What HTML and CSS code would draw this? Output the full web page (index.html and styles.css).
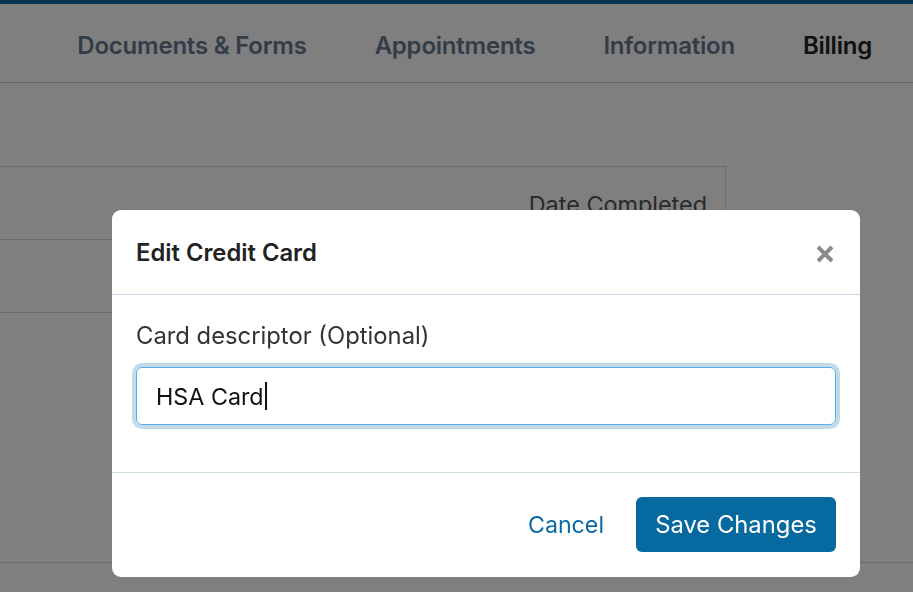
FILE: index.html
```html
<!DOCTYPE html>
<html>
<head>
<meta charset="utf-8">
<link rel="stylesheet" href="styles.css">
</head>
<body>
<div class="topbar"></div>
<nav class="nav">
  <a class="nav-item">Documents &amp; Forms</a>
  <a class="nav-item">Appointments</a>
  <a class="nav-item">Information</a>
  <a class="nav-item active">Billing</a>
</nav>
<main class="content">
  <div class="table">
    <div class="row head"><span class="cell-right">Date Completed</span></div>
    <div class="row"></div>
  </div>
  <div class="bottom-line"></div>
</main>

<div class="overlay"></div>
<div class="modal">
  <div class="modal-header">
    <h2 class="modal-title">Edit Credit Card</h2>
    <button class="close" aria-label="Close">
      <svg width="18" height="18" viewBox="0 0 18 18"><path d="M2 2 L16 16 M16 2 L2 16" stroke="#8a8a8a" stroke-width="4" stroke-linecap="butt"/></svg>
    </button>
  </div>
  <div class="modal-body">
    <label class="label">Card descriptor (Optional)</label>
    <div class="input"><span class="input-text">HSA Card</span><span class="caret"></span></div>
  </div>
  <div class="modal-footer">
    <a class="btn-link">Cancel</a>
    <button class="btn-primary">Save Changes</button>
  </div>
</div>
</body>
</html>
```
FILE: styles.css
```css
* { box-sizing: border-box; }
html, body { margin: 0; padding: 0; }
body {
  width: 913px;
  height: 592px;
  overflow: hidden;
  background: #ffffff;
  font-family: Inter, "Noto Sans", sans-serif;
}
.topbar { height: 4px; background: #0b6aa3; }
.nav {
  height: 79px;
  border-bottom: 1px solid #cdd3da;
  display: flex;
  justify-content: flex-end;
  align-items: center;
  gap: 68px;
  padding-right: 41px;
  padding-top: 4px;
}
.nav-item {
  font-size: 24px;
  font-weight: 600;
  color: #66788f;
  letter-spacing: -0.22px;
}
.nav-item.active { color: #222222; }
.content { padding-top: 83px; }
.table {
  width: 726px;
  border-top: 1px solid #d6d6d6;
  border-right: 1px solid #d6d6d6;
}
.row {
  height: 73px;
  border-bottom: 1px solid #d6d6d6;
  display: flex;
  justify-content: flex-end;
  align-items: center;
  padding-right: 18px;
}
.cell-right {
  font-size: 23.4px;
  color: #555555;
  padding-top: 2px;
}
.bottom-line {
  margin-top: 249px;
  border-top: 1px solid #d6d6d6;
}
.overlay {
  position: fixed;
  inset: 0;
  background: rgba(0, 0, 0, 0.5);
}
.modal {
  position: fixed;
  left: 112px;
  top: 210px;
  width: 748px;
  height: 367px;
  background: #ffffff;
  border-radius: 9px;
  display: flex;
  flex-direction: column;
}
.modal-header {
  height: 85px;
  border-bottom: 1px solid #cdd8e6;
  display: flex;
  align-items: center;
  justify-content: space-between;
  padding: 0 24px;
}
.modal-title {
  margin: 0;
  font-size: 23.8px;
  font-weight: 600;
  color: #222222;
  padding-top: 1px;
}
.close {
  border: 0;
  background: none;
  padding: 0;
  margin-top: 3px;
  width: 22px;
  height: 22px;
  display: flex;
  align-items: center;
  justify-content: center;
}
.modal-body {
  padding: 26px 24px 0 24px;
  height: 178px;
  border-bottom: 1px solid #cfdde6;
  display: flex;
  flex-direction: column;
}
.label {
  font-size: 23.8px;
  color: #333333;
  line-height: 30px;
  margin-bottom: 16px;
}
.input {
  height: 58px;
  border: 1px solid #55aee8;
  border-radius: 6px;
  box-shadow: 0 0 0 4px #c3dbe9;
  display: flex;
  align-items: center;
  padding-left: 19px;
  font-size: 23.3px;
  color: #111111;
}
.caret {
  display: inline-block;
  width: 2px;
  height: 28px;
  background: #111111;
  margin-left: 1px;
}
.modal-footer {
  flex: 1;
  display: flex;
  justify-content: flex-end;
  align-items: center;
  padding: 0 24px 1px 24px;
}
.btn-link {
  font-size: 23.2px;
  color: #0b6aa1;
  margin-right: 32px;
}
.btn-primary {
  height: 55px;
  width: 200px;
  border: 0;
  border-radius: 6px;
  background: #0669a0;
  color: #ffffff;
  font-family: Inter, "Noto Sans", sans-serif;
  font-size: 23.8px;
  padding: 0;
}
```
